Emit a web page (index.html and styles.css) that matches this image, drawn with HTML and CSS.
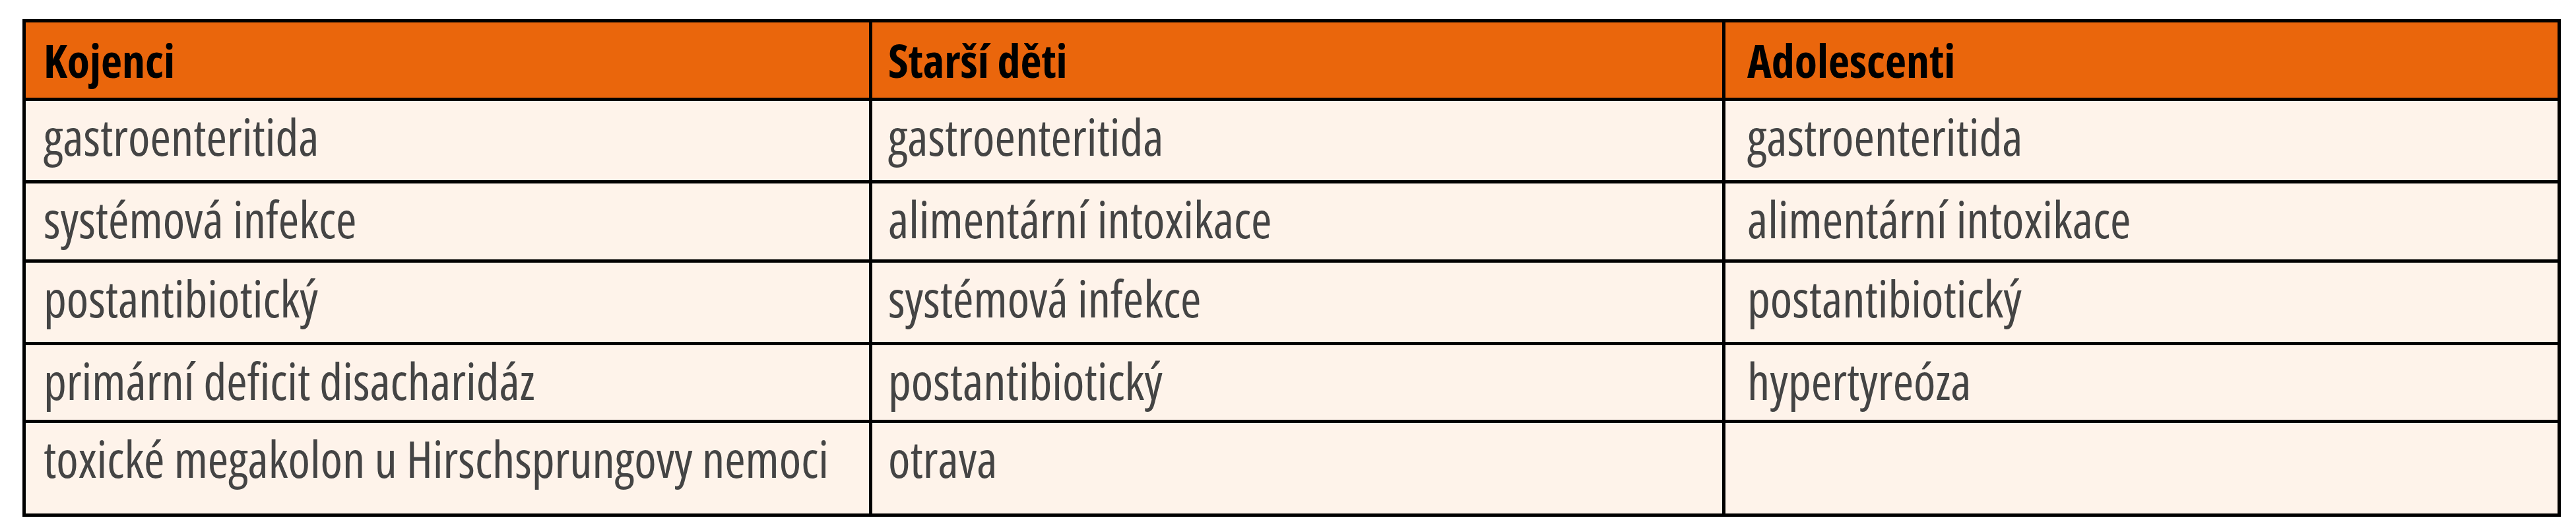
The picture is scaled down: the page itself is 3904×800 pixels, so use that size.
FILE: index.html
```html
<!DOCTYPE html>
<html lang="cs">
<head>
<meta charset="utf-8">
<title>Příčiny průjmu podle věku</title>
<link rel="stylesheet" href="styles.css">
</head>
<body>
<div class="table" role="table">
  <div class="cell head c1" role="columnheader">Kojenci</div>
  <div class="cell head c2" role="columnheader">Starší děti</div>
  <div class="cell head c3" role="columnheader">Adolescenti</div>

  <div class="cell c1" role="cell">gastroenteritida</div>
  <div class="cell c2" role="cell">gastroenteritida</div>
  <div class="cell c3" role="cell">gastroenteritida</div>

  <div class="cell c1" role="cell">systémová infekce</div>
  <div class="cell c2" role="cell">alimentární intoxikace</div>
  <div class="cell c3" role="cell">alimentární intoxikace</div>

  <div class="cell c1" role="cell">postantibiotický</div>
  <div class="cell c2" role="cell">systémová infekce</div>
  <div class="cell c3" role="cell">postantibiotický</div>

  <div class="cell c1" role="cell">primární deficit disacharidáz</div>
  <div class="cell c2" role="cell">postantibiotický</div>
  <div class="cell c3" role="cell">hypertyreóza</div>

  <div class="cell c1" role="cell">toxické megakolon u Hirschsprungovy nemoci</div>
  <div class="cell c2" role="cell">otrava</div>
  <div class="cell c3" role="cell"></div>
</div>
</body>
</html>
```

FILE: styles.css
```css
html, body {
  margin: 0;
  background: #ffffff;
}

body {
  padding: 29px 0 0 34px;
  font-family: "Open Sans", "Liberation Sans", sans-serif;
  font-stretch: 75%;
}

.table {
  display: grid;
  width: max-content;
  grid-template-columns: 1278px 1288px 1261px;
  grid-template-rows: 114px 120px 115px 120px 113px 137px;
  gap: 5px;
  padding: 5px;
  background: #000000;
}

.cell {
  background: #fef3ea;
  color: #444444;
  font-size: 76px;
  line-height: 80px;
  padding-top: 14px;
  white-space: nowrap;
  overflow: hidden;
}

.head {
  background: #ea660c;
  color: #000000;
  font-weight: bold;
  font-size: 70px;
  padding-top: 17px;
}

.c1 { padding-left: 27px; }
.c2 { padding-left: 24px; }
.c3 { padding-left: 33px; }
```
